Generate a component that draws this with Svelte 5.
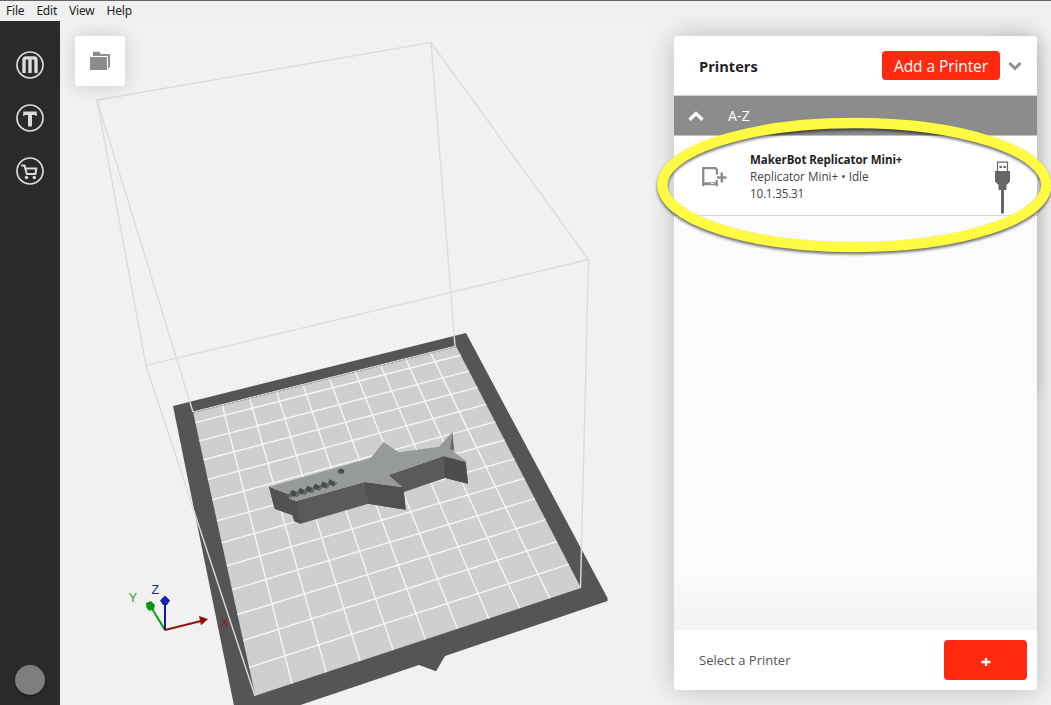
<script>
  const menus = ['File', 'Edit', 'View', 'Help'];

  // Build plate corners on screen: back-left, back-right, front-right, front-left
  const [A, B, C, D] = [[193, 412], [456, 346], [581, 588], [255.3, 695.7]];

  // Perspective mapping from the unit square onto the plate
  const sx = A[0] - B[0] + C[0] - D[0];
  const sy = A[1] - B[1] + C[1] - D[1];
  const dx1 = B[0] - C[0], dx2 = D[0] - C[0];
  const dy1 = B[1] - C[1], dy2 = D[1] - C[1];
  const det = dx1 * dy2 - dx2 * dy1;
  const g = (sx * dy2 - dx2 * sy) / det;
  const h = (dx1 * sy - sx * dy1) / det;
  function project(u, v) {
    const w = g * u + h * v + 1;
    return [
      ((B[0] - A[0] + g * B[0]) * u + (D[0] - A[0] + h * D[0]) * v + A[0]) / w,
      ((B[1] - A[1] + g * B[1]) * u + (D[1] - A[1] + h * D[1]) * v + A[1]) / w
    ];
  }
  const line = (p, q) => `M${p[0].toFixed(2)} ${p[1].toFixed(2)}L${q[0].toFixed(2)} ${q[1].toFixed(2)}`;

  // 10 mm grid on a 101 x 126 mm plate
  let grid = '';
  for (let x = 10.5; x < 100; x += 10) grid += line(project(x / 101, 0), project(x / 101, 1));
  for (let y = 6; y < 120; y += 10) grid += line(project(0, y / 126), project(1, y / 126));
</script>

<div class="app">
  <nav class="menubar">
    {#each menus as m}<span>{m}</span>{/each}
  </nav>

  <div class="body">
    <aside class="sidebar">
      <svg width="28" height="28" viewBox="0 0 28 28">
        <circle cx="14" cy="14" r="13" fill="none" stroke="#dcdcdc" stroke-width="1.7" />
        <path d="M6.300 22V9Q6.300 5.200 10 5.200H18Q21.700 5.200 21.700 9V22H18.300V9.500Q18.300 8.500 17.500 8.500H15.700V22H12.300V8.500H10.500Q9.700 8.500 9.700 9.500V22Z" fill="#dcdcdc" />
      </svg>
      <svg width="28" height="28" viewBox="0 0 28 28">
        <circle cx="14" cy="14" r="13" fill="none" stroke="#dcdcdc" stroke-width="1.7" />
        <path d="M7.200 7.500H20.800V12H19.500V11H16V22.500H12V11H8.500V12H7.200Z" fill="#dcdcdc" />
      </svg>
      <svg width="28" height="28" viewBox="0 0 28 28">
        <circle cx="14" cy="14" r="13" fill="none" stroke="#dcdcdc" stroke-width="1.700" />
        <path d="M5.300 8.500H8.500L10.800 17H19.500L20.300 11.500H9.600" fill="none" stroke="#dcdcdc" stroke-width="2" />
        <circle cx="10.500" cy="20.500" r="1.700" fill="#dcdcdc" />
        <circle cx="18.300" cy="20.500" r="1.700" fill="#dcdcdc" />
      </svg>
      <div class="avatar"></div>
    </aside>

    <main class="workspace">
      <svg class="scene" width="991" height="684" viewBox="60 21 991 684">
        <path d="M173 406L466 333L607.500 598V601L445 656L436 671.300L419 665L299 705.500H234Z" fill="#555" />
        <path d={line(A, B) + line(B, C).replace('M', 'L') + line(C, D).replace('M', 'L') + 'Z'} fill="#cfcfcf" />
        <path d={grid} stroke="#f5f5f5" stroke-width="1.400" fill="none" />
        <path d={line(A, B)} stroke="#e8e8e8" stroke-width="1" />
        <path d={line(A, B)} stroke="#777" stroke-width=".6" stroke-dasharray="3 1" transform="translate(0 .8)" />
        <path d="M97 100L431 42.500L588.500 259.500L146 365.500ZM97 100L193 412M431 42.500L455 346M588.500 259.500L580.500 588M146 365.500L255 696" class="box" />
        <g transform="translate(240 420) scale(.33333)">
          <path d="M87 200L148 223L147 238L168 243L374 186L485 202L445 165L610 108L677 125L684 191L616 174L492 216L497 269L385 251L182 311L163 304L158 286L104 266Z" fill="#5a5a5a" />
          <path d="M374 186L490 202L497 269L385 251Z" fill="#505050" />
          <path d="M610 108L677 125L684 191L616 174Z" fill="#4d4d4d" />
          <path d="M87 200L168 243L182 311L163 304L158 286L104 266Z" fill="#515151" />
          <path d="M637 36L643 93L628 88Z" fill="#666b6b" />
          <path d="M87 200L392 114L431 66L476 97L597 80L637 36L630 87L677 122L677 126L610 108L445 165L488 202L374 186L168 243L147 237L148 222Z" fill="#969b9a" />
          <path d="M146 222L157 209L171 216L180 204L194 210L202 197L217 203L225 191L240 197L248 185L263 190L269 178L293 188L281 200L271 195L262 207L249 202L239 213L227 208L217 220L205 215L195 226L183 221L172 231L160 228L150 236Z" fill="#666969" />
          <path d="M157 209L152 225L165 231L170 218ZM180 204L175 216L188 223L193 212ZM202 197L197 211L211 217L216 205ZM225 191L221 205L233 210L239 199ZM248 185L243 198L256 204L261 193ZM269 178L267 191L281 199L285 190Z" fill="#494b4b" />
          <ellipse cx="303" cy="154" rx="10" ry="7.500" fill="#4a4a4a" />
          <path d="M295 151L302 160" stroke="#6b6e6e" stroke-width="3" />
        </g>
        <g stroke-width="2" fill="none">
          <path d="M165 630L151 607" stroke="#0d9b12" />
          <path d="M165 630L203 620.500" stroke="#8c160c" />
          <path d="M165 630V600" stroke="#101a96" />
        </g>
        <path d="M146 603L151 601L155 605L154 609L149.500 611L146.500 608Z" fill="#0a960f" />
        <path d="M199 616L208 619L201 625.300Z" fill="#86130b" />
        <path d="M160 600.500L165 595.500L170 600.500L167 605H163Z" fill="#1522b0" />
        <text x="128.700" y="601.700" fill="#2a9c2c">Y</text>
        <text x="151.500" y="593.700" fill="#20269a">Z</text>
        <text x="220.300" y="627.200" fill="#8c1c18">X</text>
      </svg>

      <button class="files" aria-label="Files">
        <svg width="22" height="22" viewBox="0 0 22 22">
          <path d="M4 1.700H10L12 4H4Z" fill="#8c8c8c" />
          <path d="M4 4H21V17L18.500 19.500V6H4Z" fill="#8c8c8c" />
          <path d="M1 7H18V20H1Z" fill="#8c8c8c" />
          <path d="M18.500 5.700V18.500" stroke="#fff" stroke-width="1.100" />
        </svg>
      </button>

      <section class="panel">
        <header>
          <h1>Printers</h1>
          <button class="add">Add a Printer</button>
          <svg width="14" height="10" viewBox="0 0 14 10"><path d="M1.500 2L7 7.500L12.500 2" fill="none" stroke="#8c8c8c" stroke-width="3" /></svg>
        </header>
        <div class="group">
          <svg width="16" height="12" viewBox="0 0 16 12"><path d="M1.500 9.800L8 3.500L14.500 9.800" fill="none" stroke="#fff" stroke-width="3.300" /></svg>
          <span>A-Z</span>
        </div>
        <div class="printer">
          <svg width="26" height="22" viewBox="0 0 26 22" fill="none" stroke="#8c8c8c">
            <path d="M2.200 20.300V2.200H14.500L16 4V8.500M2 17.300H16.500M15.800 14V20.300" stroke-width="2.300" />
            <path d="M2 18.500H16" stroke-width="1.500" />
            <path d="M10 17.500H13" stroke="#fff" stroke-width="1" />
            <path d="M16 11.500H25.500M20.800 6.500V16.500" stroke-width="2.500" />
          </svg>
          <div class="info">
            <strong>MakerBot Replicator Mini+</strong>
            <span>Replicator Mini+ • Idle</span>
            <span class="ip">10.1.35.31</span>
          </div>
          <svg class="usb" width="17" height="53" viewBox="0 0 17 53">
            <path d="M3.500 11V1.200H13.500V11" fill="none" stroke="#666" stroke-width="1.200" />
            <path d="M5.500 5H8V7H5.500ZM9.500 5H12V7H9.500Z" fill="#666" />
            <path d="M1 10H16V20.500L12.500 24V29H10V52.500H7V29H4.500V24L1 20.500Z" fill="#666" />
          </svg>
        </div>
        <div class="list"></div>
        <footer>
          <span>Select a Printer</span>
          <button class="plus" aria-label="Add">
            <svg width="10" height="10" viewBox="0 0 10 10"><path d="M.5 5H9.500M5 1V9" stroke="#fff" stroke-width="2.300" /></svg>
          </button>
        </footer>
      </section>

      <svg class="ring" width="411" height="160" viewBox="640 110 411 160">
        <ellipse cx="854.300" cy="185" rx="192" ry="62" />
      </svg>
    </main>
  </div>
</div>

<style>
  :global(body) { margin: 0; overflow: hidden; }
  .app {
    width: 1051px; height: 705px; display: flex; flex-direction: column;
    font-family: "Open Sans", "Noto Sans", sans-serif; background: #f1f1f1; overflow: hidden;
  }
  .menubar {
    box-sizing: border-box; height: 21px; border-top: 1px solid #626366; background: #f0f0f0;
    display: flex; gap: 12px; padding-left: 6px; font: 12px/20px "Noto Sans", sans-serif;
    color: #222; letter-spacing: -.2px;
  }
  .body { flex: 1; display: flex; }
  .sidebar {
    width: 60px; box-sizing: border-box; background: #2a2a2a; display: flex; flex-direction: column;
    align-items: center; gap: 25px; padding: 30px 0 10px;
  }
  .avatar { width: 30px; height: 30px; border-radius: 50%; background: #7d7d7d; margin-top: auto; box-shadow: 0 1px 2px #111; }
  .workspace {
    flex: 1; position: relative; isolation: isolate; box-sizing: border-box; padding: 15px 14px 15px 15px;
    display: flex; justify-content: space-between; align-items: flex-start;
  }
  .scene { position: absolute; inset: 0; }
  .box { fill: none; stroke: #dcdcdc; stroke-width: 1.400; }
  .scene text { font: 12.500px "Liberation Sans", sans-serif; }
  button { border: 0; padding: 0; font-family: inherit; }
  .files {
    position: relative; width: 50px; height: 50px; border-radius: 3px; background: #fff;
    display: grid; place-items: center; box-shadow: 0 0 20px rgba(0, 0, 0, .16);
  }
  .panel {
    position: relative; width: 363px; height: 654px; border-radius: 4px; display: flex; flex-direction: column;
    background: #fafafa; box-shadow: 0 0 28px rgba(0, 0, 0, .22);
  }
  .panel::before {
    content: ""; position: absolute; z-index: -1; right: 2px; top: 4px; width: 40px; height: 355px;
    box-shadow: 0 0 16px rgba(0, 0, 0, .2);
  }
  header {
    height: 60px; box-sizing: border-box; background: #fff; border-radius: 4px 4px 0 0; display: flex;
    align-items: center; padding: 0 15px 0 25px; border-bottom: 1px solid #ccd0cd; flex: none;
  }
  h1 { flex: 1; margin: 1px 0 0; font-size: 14.600px; font-weight: 700; color: #222; letter-spacing: 0; }
  .add {
    width: 118px; height: 29px; border-radius: 4px; background: #ff2a0f; color: #fff; font-size: 15.500px;
    line-height: 28px; margin-right: 8px; letter-spacing: -.08px; white-space: nowrap;
  }
  .group {
    height: 40px; box-sizing: border-box; border-bottom: 1px solid #bfc3c0; background: #8c8c8c; color: #fff;
    display: flex; align-items: center; gap: 24px; padding: 0 0 0 14px; font-size: 14px; letter-spacing: .2px; flex: none;
  }
  .group svg { margin-top: 1px; }
  .printer {
    height: 80px; box-sizing: border-box; background: #fff; border-bottom: 1px solid #d5d9d6; display: flex;
    align-items: flex-start; padding: 0 26px 0 27px; flex: none;
  }
  .printer > svg { margin-top: 30px; }
  .printer > .usb { margin-top: 25px; }
  .info { flex: 1; margin: 15px 0 0 23px; display: flex; flex-direction: column; font-size: 11.700px; line-height: 17px; color: #444; }
  .info strong { color: #222; font-size: 11.500px; letter-spacing: -.05px; }
  .info .ip { letter-spacing: -.2px; }
  .list { flex: 1; background: linear-gradient(#fbfbfb 85%, #f3f3f3); }
  footer {
    height: 60px; box-sizing: border-box; background: #fff; border-radius: 4px; display: flex; align-items: center;
    justify-content: space-between; padding: 0 10px 0 25px; font-size: 13px; color: #555; flex: none;
  }
  .plus { width: 83px; height: 40px; border-radius: 4px; background: #ff2a0f; display: grid; place-items: center; }
  .plus svg { margin-top: 4px; }
  .ring { position: absolute; left: 580px; top: 89px; pointer-events: none; }
  .ring ellipse { fill: none; stroke: #fffb42; stroke-width: 10.300; filter: drop-shadow(0 2px 1.500px rgba(0, 0, 0, .6)); }
</style>
